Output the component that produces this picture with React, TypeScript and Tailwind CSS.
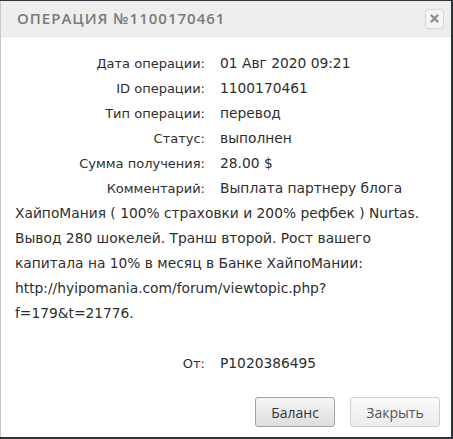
import React from 'react';

const rows: { label: string; value: string }[] = [
    { label: 'Дата операции:', value: '01 Авг 2020 09:21' },
    { label: 'ID операции:', value: '1100170461' },
    { label: 'Тип операции:', value: 'перевод' },
    { label: 'Статус:', value: 'выполнен' },
    { label: 'Сумма получения:', value: '28.00 $' },
];

const comment =
    'Выплата партнеру блога ХайпоМания ( 100% страховки и 200% рефбек ) Nurtas. Вывод 280 шокелей. Транш второй. Рост вашего капитала на 10% в месяц в Банке ХайпоМании: http://hyipomania.com/forum/viewtopic.php?f=179&t=21776.';

function Row({ label, children }: { label: string; children: React.ReactNode }) {
    return (
        <div className="text-[13.8px] leading-[25px] break-words">
            <span className="inline-block align-top w-[190px] mr-[15px] text-right text-[13px] leading-[25px]">{label}</span>
            {children}
        </div>
    );
}

export default function App() {
    return (
        <div className="w-[453px] h-[439px] bg-[#2d3338] pt-[1px] pr-[2px] pb-[2px]">
            <div className="h-full bg-white border-l border-[#c8c8c8] flex flex-col font-['DejaVu_Sans',sans-serif] text-[#2e2e2e]">
                <div className="h-[36px] bg-[#eeeeee] flex items-center justify-between pl-[16px] pr-[7px] border-b border-[#e2e2e2]">
                    <h3 className="font-['Open_Sans',sans-serif] text-[15px] font-semibold tracking-[1px] text-[#7a7a7a] uppercase">Операция №1100170461</h3>
                    <button className="w-[19px] h-[20px] rounded-[3px] border border-[#d6d6d6] bg-[#f4f4f4] flex items-center justify-center">
                        <svg width="9" height="9" viewBox="0 0 9 9">
                            <path d="M1.5 1.5 L7.5 7.5 M7.5 1.5 L1.5 7.5" stroke="#8a8a8a" strokeWidth="2.2" strokeLinecap="round" />
                        </svg>
                    </button>
                </div>

                <div className="pl-[14px] pr-[24px] pt-[14px]">
                    {rows.map((r) => (
                        <Row key={r.label} label={r.label}>
                            {r.value}
                        </Row>
                    ))}
                    <Row label="Комментарий:">{comment}</Row>
                    <div className="h-[25px]" />
                    <Row label="От:">P1020386495</Row>
                </div>

                <div className="mt-auto flex justify-end gap-[15px] pr-[11px] pb-[10px] font-['Open_Sans',sans-serif] text-[14px]">
                    <button className="w-[80px] h-[30px] rounded-[3px] border border-[#a3a3a3] bg-gradient-to-b from-[#f6f6f6] to-[#dedede] text-[#333]">
                        Баланс
                    </button>
                    <button className="w-[90px] h-[30px] rounded-[3px] border border-[#d0d0d0] bg-gradient-to-b from-[#fafafa] to-[#ececec] text-[#555]">
                        Закрыть
                    </button>
                </div>
            </div>
        </div>
    );
}
